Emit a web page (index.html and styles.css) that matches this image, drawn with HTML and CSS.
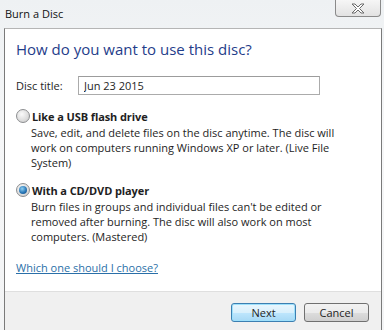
FILE: index.html
```html
<!DOCTYPE html>
<html lang="en">
<head>
    <meta charset="UTF-8">
    <title>Burn a Disc</title>
    <link rel="stylesheet" href="styles.css">
</head>
<body>
    <div class="window">
        <div class="titlebar">
            <span class="title">Burn a Disc</span>
            <div class="close-btn">
                <svg width="14" height="11" viewBox="0 0 14 11">
                    <path d="M1 1h3l3 3 3-3h3l-4.5 4.5L13 10h-3L7 7l-3 3H1l4.5-4.5z" fill="#fff" stroke="#6a6a6a" stroke-width="1"/>
                </svg>
            </div>
        </div>
        <div class="panel">
            <div class="content">
                <h1 class="instruction">How do you want to use this disc?</h1>
                <div class="form-row">
                    <label for="disc_title">Disc title:</label>
                    <input type="text" id="disc_title" value="Jun 23 2015">
                </div>
                <div class="option">
                    <div class="option-head">
                        <span class="radio"></span>
                        <span class="option-title">Like a USB flash drive</span>
                    </div>
                    <p class="option-desc">Save, edit, and delete files on the disc anytime. The disc will work on computers running Windows XP or later. (Live File System)</p>
                </div>
                <div class="option">
                    <div class="option-head">
                        <span class="radio checked"></span>
                        <span class="option-title">With a CD/DVD player</span>
                    </div>
                    <p class="option-desc">Burn files in groups and individual files can't be edited or removed after burning. The disc will also work on most computers. (Mastered)</p>
                </div>
                <a class="help-link" href="#">Which one should I choose?</a>
            </div>
            <div class="footer">
                <button class="btn default">Next</button>
                <button class="btn">Cancel</button>
            </div>
        </div>
    </div>
</body>
</html>
```

FILE: styles.css
```css
body {
    margin: 0;
    font-family: "Open Sans", "Noto Sans", sans-serif;
    font-size: 11px;
    color: #1e1e1e;
    background: linear-gradient(180deg, #eef1f3 0%, #f6f7f8 40%, #f3f4f5 100%);
}
.window {
    width: 384px;
    height: 330px;
    display: flex;
    flex-direction: column;
}
.titlebar {
    height: 28px;
    display: flex;
    align-items: flex-start;
    padding-left: 5px;
}
.title {
    margin-top: 6px;
    font-size: 11px;
    color: #111;
}
.close-btn {
    margin-left: auto;
    margin-right: 3px;
    width: 44px;
    height: 16px;
    border: 1px solid #8a8a8a;
    border-top: none;
    border-radius: 0 0 4px 4px;
    background: linear-gradient(180deg, #f6f6f6, #e2e2e2);
    display: flex;
    align-items: center;
    justify-content: center;
}
.panel {
    flex: 1;
    min-height: 0;
    margin: 0 2px 0 4px;
    border: 1px solid #7a7a7a;
    border-top-color: #b5b5b5;
    border-bottom: none;
    background: #fff;
    display: flex;
    flex-direction: column;
}
.content {
    flex: 1;
    padding: 0 11px 0 11px;
}
.instruction {
    margin: 10px 0 0 0;
    font-size: 15px;
    font-weight: normal;
    color: #1f3d8a;
    line-height: 20px;
}
.form-row {
    display: flex;
    align-items: center;
    margin-top: 17px;
}
.form-row label {
    width: 62px;
}
.form-row input {
    width: 230px;
    height: 17px;
    padding: 0 5px;
    border: 1px solid #ababab;
    border-top-color: #9c9c9c;
    font-family: inherit;
    font-size: 11px;
    color: #1e1e1e;
}
.option {
    margin-top: 13px;
}
.option + .option {
    margin-top: 12px;
}
.option-head {
    display: flex;
    align-items: center;
    height: 16px;
}
.radio {
    width: 12px;
    height: 12px;
    border-radius: 50%;
    border: 1px solid #8c8e90;
    background: radial-gradient(circle at 40% 35%, #fafafa 0%, #dcdcdc 60%, #c4c4c4 100%);
    margin-right: 2px;
    position: relative;
}
.radio.checked::after {
    content: "";
    position: absolute;
    left: 2px;
    top: 2px;
    width: 8px;
    height: 8px;
    border-radius: 50%;
    background: radial-gradient(circle at 40% 35%, #8fd0f2 0%, #2a78b8 55%, #12467a 100%);
}
.option-title {
    font-weight: bold;
    font-size: 11px;
    letter-spacing: -0.1px;
}
.option-desc {
    margin: 1px 0 0 15px;
    line-height: 15px;
    width: 320px;
}
.help-link {
    display: inline-block;
    margin-top: 16px;
    color: #2a6fa8;
    text-decoration: underline;
}
.footer {
    box-sizing: border-box;
    height: 39px;
    border-top: 1px solid #dfdfdf;
    background: #f0f0f0;
    display: flex;
    justify-content: flex-end;
    align-items: flex-start;
    gap: 8px;
    padding: 11px 12px 0 0;
}
.btn {
    width: 65px;
    height: 19px;
    border: 1px solid #707070;
    border-radius: 3px;
    background: linear-gradient(180deg, #f2f2f2 0%, #ebebeb 50%, #dddddd 51%, #cfcfcf 100%);
    font-family: inherit;
    font-size: 11px;
    color: #1e1e1e;
    padding: 0;
}
.btn.default {
    border-color: #3c7fb1;
    background: linear-gradient(180deg, #eaf6fd 0%, #d9f0fc 50%, #bee6fd 51%, #a7d9f5 100%);
    box-shadow: inset 0 0 0 1px #9ee0fb;
}
```
